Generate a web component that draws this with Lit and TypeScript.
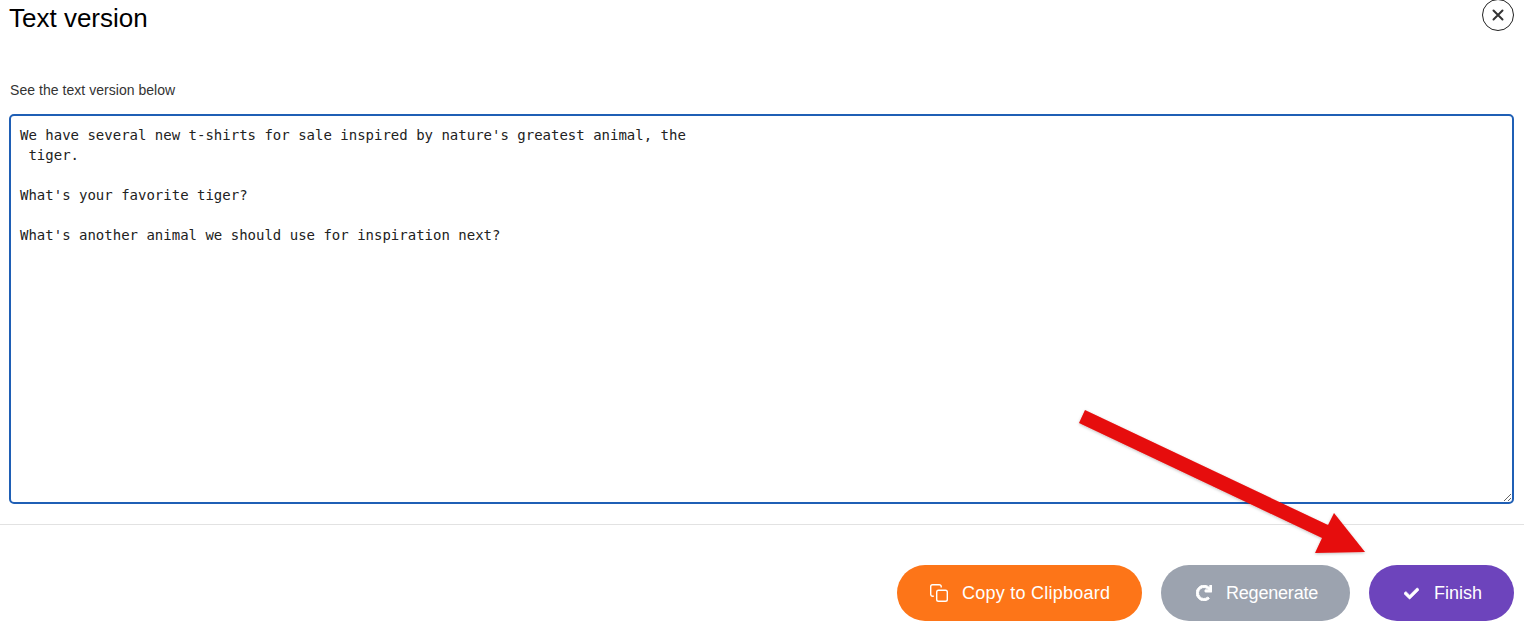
import { LitElement, css, html } from 'lit'
import { customElement } from 'lit/decorators.js'

const TEXT = `We have several new t-shirts for sale inspired by nature's greatest animal, the
 tiger.

What's your favorite tiger?

What's another animal we should use for inspiration next?`

@customElement('app-root')
export class AppRoot extends LitElement {
  render() {
    return html`
      <div class="header">
        <h1>Text version</h1>
        <button class="close" aria-label="Close">
          <svg width="12" height="12" viewBox="0 0 12 12">
            <path d="M1.5 1.5l9 9M10.500 1.5l-9 9" stroke="#333" stroke-width="2" stroke-linecap="round" fill="none"></path>
          </svg>
        </button>
      </div>
      <label for="out">See the text version below</label>
      <textarea id="out" .value=${TEXT} spellcheck="false"></textarea>
      <hr />
      <div class="actions">
        <button class="btn copy">
          <svg width="18" height="18" viewBox="0 0 18 18" fill="none" stroke="#fff" stroke-width="1.4">
            <rect x="6.700" y="6.200" width="10.600" height="11.100" rx="1.800"></rect>
            <path d="M3.800 12.200h-1.200a1.900 1.900 0 0 1-1.900-1.900V2.600a1.900 1.900 0 0 1 1.900-1.900h6.700a1.900 1.900 0 0 1 1.900 1.900v.8"></path>
          </svg>
          Copy to Clipboard
        </button>
        <button class="btn regen">
          <svg width="16" height="16" viewBox="0 0 512 512" fill="#fff" stroke="#fff" stroke-width="32">
            <path d="M500.300 0h-47.400a12 12 0 0 0-12 12.600l4 82.800A247.400 247.400 0 0 0 256 8C119.300 8 7.900 119.500 8 256.200 8.100 393.100 119.100 504 256 504a247.100 247.100 0 0 0 166.200-63.900 12 12 0 0 0 .5-17.400l-34-34a12 12 0 0 0-16.400-.6A176 176 0 1 1 402.100 157.800l-101.500-4.900a12 12 0 0 0-12.600 12v47.400a12 12 0 0 0 12 12h200.300a12 12 0 0 0 12-12V12a12 12 0 0 0-12-12z"></path>
          </svg>
          <span>Regenerate</span>
        </button>
        <button class="btn finish">
          <svg width="15" height="15" viewBox="0 0 512 512" fill="#fff" stroke="#fff" stroke-width="20">
            <path d="M173.900 439.400l-166.400-166.400c-10-10-10-26.200 0-36.200l36.200-36.200c10-10 26.200-10 36.200 0L192 312.700 432.100 72.600c10-10 26.200-10 36.200 0l36.200 36.200c10 10 10 26.200 0 36.200l-294.400 294.400c-10 10-26.200 10-36.200 0z"></path>
          </svg>
          Finish
        </button>
      </div>
      <svg class="arrow" width="1524" height="626" viewBox="0 0 1524 626">
        <defs>
          <filter id="shade" x="-5%" y="-5%" width="110%" height="110%">
            <feDropShadow dx="0" dy="1" stdDeviation="1.5" flood-color="#000" flood-opacity="0.25"></feDropShadow>
          </filter>
        </defs>
        <polygon
          fill="#e60a0a"
          filter="url(#shade)"
          points="1085,410 1328,525 1334,513 1365,552 1315,553 1322,538 1079,423"
        ></polygon>
      </svg>
    `
  }

  static styles = css`
    :host {
      display: block;
      position: relative;
      width: 1524px;
      height: 626px;
      overflow: hidden;
      background: #fff;
      font-family: 'Liberation Sans', Arial, sans-serif;
    }
    .header {
      display: flex;
      justify-content: space-between;
      align-items: flex-start;
      height: 82px;
      padding: 0 10px 0 9px;
    }
    h1 {
      margin: 3px 0 0;
      font-size: 26px;
      line-height: 30px;
      font-weight: 400;
      color: #000;
    }
    .close {
      display: flex;
      align-items: center;
      justify-content: center;
      width: 32px;
      height: 32px;
      margin-top: -1px;
      padding: 0;
      border: 1px solid #222;
      border-radius: 50%;
      background: #fff;
    }
    label {
      display: block;
      margin-left: 10px;
      font-size: 14px;
      letter-spacing: 0.04px;
      line-height: 16px;
      color: #333;
    }
    textarea {
      display: block;
      box-sizing: border-box;
      width: 1505px;
      height: 390px;
      margin: 16px 0 0 9px;
      padding: 9px;
      border: 2px solid #1f5fb5;
      border-radius: 5px;
      outline: none;
      font-family: 'DejaVu Sans Mono', monospace;
      font-size: 14px;
      line-height: 20px;
      color: #222;
      white-space: pre;
      overflow: hidden;
    }
    hr {
      margin: 20px 0 0;
      border: 0;
      border-top: 1px solid #e2e2e2;
    }
    .actions {
      display: flex;
      justify-content: flex-end;
      gap: 19px;
      margin-top: 40px;
      padding-right: 10px;
    }
    .btn {
      display: flex;
      align-items: center;
      justify-content: flex-start;
      box-sizing: border-box;
      height: 56px;
      padding: 0 0 0 35px;
      border: 0;
      border-radius: 28px;
      color: #fff;
      font-family: inherit;
      font-size: 18px;
    }
    .copy {
      width: 245px;
      padding-left: 33px;
      gap: 14px;
      letter-spacing: 0.25px;
      background: #fd7518;
    }
    .regen {
      width: 189px;
      gap: 14px;
      letter-spacing: -0.2px;
      background: #9ca3af;
    }
    .finish {
      width: 145px;
      gap: 15px;
      background: #6d44bc;
    }
    .arrow {
      position: absolute;
      inset: 0;
      pointer-events: none;
    }
  `
}
